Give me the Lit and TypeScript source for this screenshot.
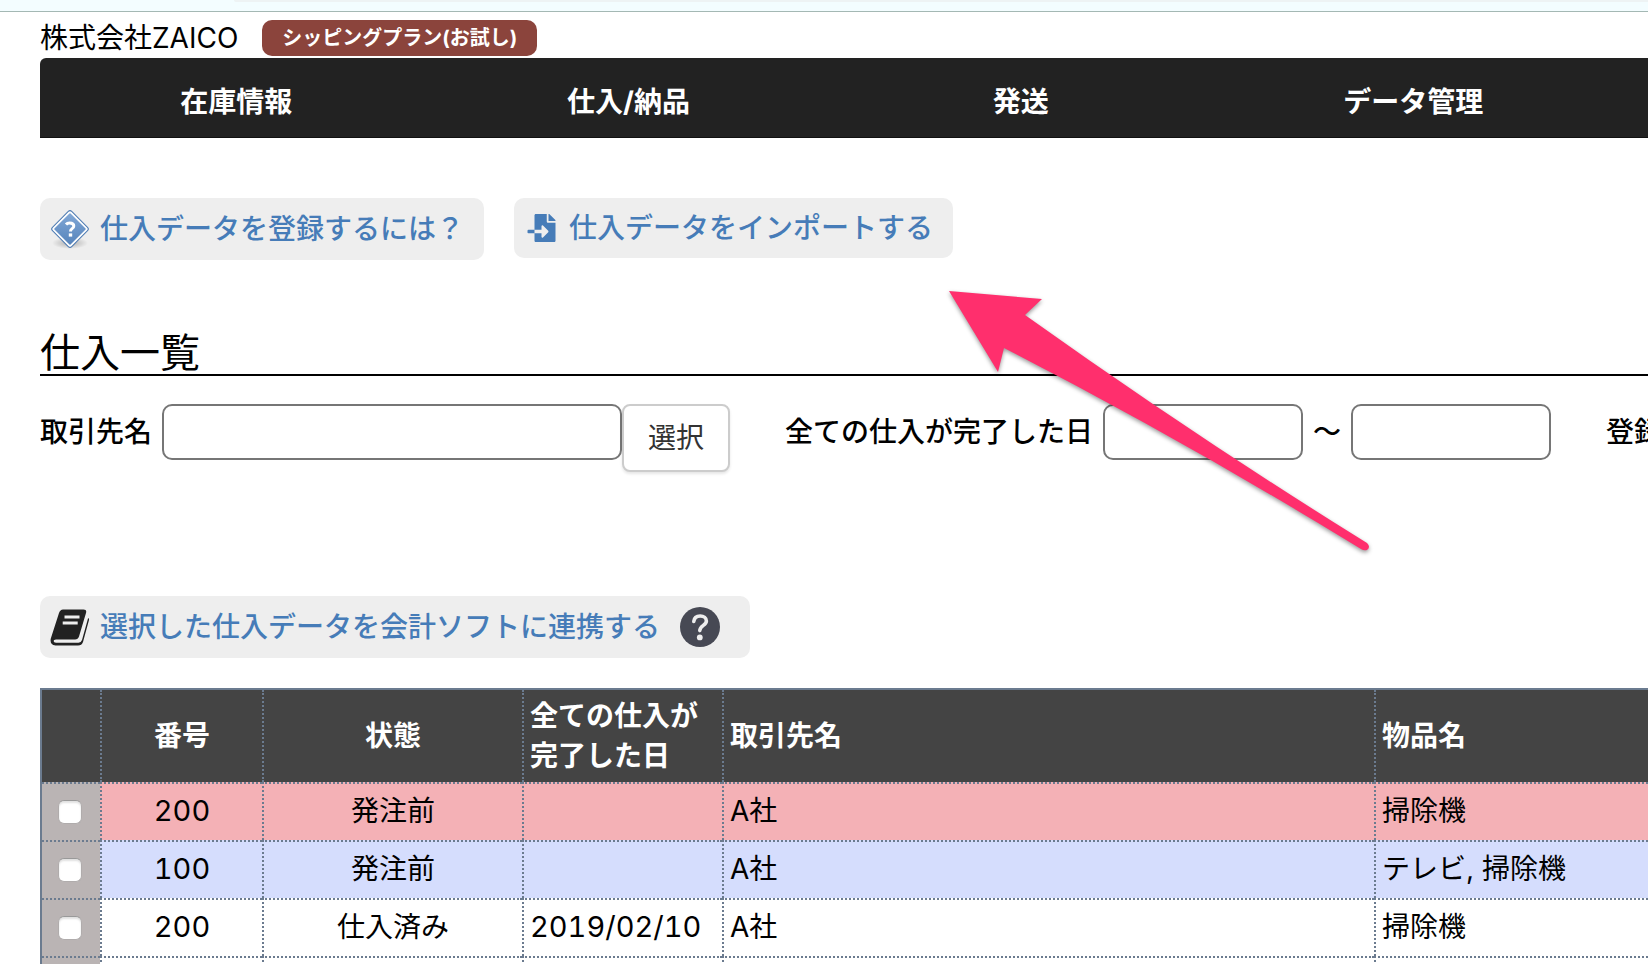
import { LitElement, html, css, svg, nothing } from "lit";
import { customElement } from "lit/decorators.js";
import { classMap } from "lit/directives/class-map.js";

interface PurchaseRow {
  no: string;
  status: string;
  done: string;
  vendor: string;
  items: string;
  tone: "" | "pink" | "blue";
}

const NAV = ["在庫情報", "仕入/納品", "発送", "データ管理"];

const ROWS: PurchaseRow[] = [
  { no: "200", status: "発注前", done: "", vendor: "A社", items: "掃除機", tone: "pink" },
  { no: "100", status: "発注前", done: "", vendor: "A社", items: "テレビ, 掃除機", tone: "blue" },
  { no: "200", status: "仕入済み", done: "2019/02/10", vendor: "A社", items: "掃除機", tone: "" },
  { no: "", status: "", done: "", vendor: "", items: "", tone: "" },
];

const helpDiamond = svg`
  <defs>
    <linearGradient id="sign" x1="0" y1="0" x2="1" y2="1">
      <stop offset="0" stop-color="#82a8d6"></stop>
      <stop offset="1" stop-color="#5583bb"></stop>
    </linearGradient>
    <radialGradient id="floor">
      <stop offset="0" stop-color="#000" stop-opacity="0.28"></stop>
      <stop offset="1" stop-color="#000" stop-opacity="0"></stop>
    </radialGradient>
  </defs>
  <ellipse cx="20" cy="34" rx="18" ry="6" fill="url(#floor)"></ellipse>
  <rect x="6.4" y="6.4" width="27.2" height="27.2" rx="2.4" transform="rotate(45 20 20)" fill="#fff" stroke="#4c7ab2" stroke-width="1"></rect>
  <rect x="8.6" y="8.6" width="22.8" height="22.8" rx="0.8" transform="rotate(45 20 20)" fill="url(#sign)"></rect>
  <path d="M16 15.4 q1.200 -1.400 3.600 -1.400 q4.200 0 4.200 3 q0 1.700 -1.800 2.700 q-1.500 0.900 -1.500 2.700" fill="none" stroke="#fff" stroke-width="3"></path>
  <rect x="18.800" y="24.400" width="3.400" height="3.200" fill="#fff"></rect>`;

const fileImport = svg`
  <path fill="#467cb8" d="M16 288c-8.800 0-16 7.200-16 16v32c0 8.800 7.200 16 16 16h112v-64zm489-183L407.100 7c-4.500-4.500-10.600-7-17-7H384v128h128v-6.100c0-6.300-2.500-12.400-7-16.900zm-153 31V0H152c-13.300 0-24 10.700-24 24v264h128v-65.200c0-14.300 17.300-21.400 27.400-11.300L379 308c6.600 6.700 6.600 17.400 0 24l-95.700 96.400c-10.100 10.100-27.400 3-27.400-11.300V352H128v136c0 13.300 10.700 24 24 24h336c13.300 0 24-10.700 24-24V160H376c-13.200 0-24-10.800-24-24z"></path>`;

const book = svg`
  <path fill="#222" d="M13 2.500 H33.500 Q37 2.500 36 6 L29 29.500 Q28 32.500 25 32.500 H6 Q3.600 32.500 3.600 34 Q3.600 35.800 6 35.800 H28.500 Q31 35.800 32 33 L38 11.500 Q39.300 10.500 39 13 L33 35 Q31.800 38.500 28 38.500 H5.500 Q-0.500 38 0.800 31.500 L9 6 Q10.200 2.500 13 2.500 Z"></path>
  <path d="M14.500 10 H29.500 M12.700 16 H27.700" stroke="#eee" stroke-width="2.800" fill="none"></path>`;

const helpCircle = svg`
  <circle cx="20" cy="20" r="20" fill="#474954"></circle>
  <path d="M13.800 14.400 C14.200 10.600 16.800 9 20.200 9 C23.800 9 26.400 11 26.400 14 C26.400 18.400 19.800 18.400 19.800 23.600" fill="none" stroke="#eee" stroke-width="3.600" stroke-linecap="round"></path>
  <circle cx="19.800" cy="30.400" r="2.900" fill="#eee"></circle>`;

@customElement("app-root")
export class AppRoot extends LitElement {
  static styles = css`
    :host {
      display: block;
      position: relative;
      height: 100vh;
      overflow: hidden;
      background: #fff;
      color: #000;
      font: 400 28px/40px Inter, "Noto Sans CJK JP", sans-serif;
    }
    * {
      box-sizing: border-box;
    }
    .chrome {
      height: 12px;
      padding-left: 234px;
      background: #f3fdff;
      border-bottom: 1px solid #a4b8b4;
    }
    .address {
      height: 2px;
      background: #eef3f4;
      border-bottom-left-radius: 8px;
    }
    .page {
      padding-left: 40px;
    }
    .wide {
      width: 122%;
    }
    .brand {
      display: flex;
      align-items: center;
      gap: 24px;
      height: 46px;
      padding-top: 6px;
    }
    .plan {
      padding: 0 20px;
      border-radius: 10px;
      background: #8b443c;
      color: #fff;
      font-size: 20px;
      font-weight: 700;
      line-height: 36px;
    }
    nav {
      display: grid;
      grid-template-columns: repeat(5, 1fr);
      height: 80px;
      border-radius: 6px 6px 0 0;
      border-bottom: 1px solid #111;
      background: #222;
    }
    nav a {
      display: flex;
      align-items: center;
      justify-content: center;
      padding-top: 8px;
      color: #fff;
      font-weight: 700;
      text-decoration: none;
    }
    .actions {
      display: flex;
      align-items: flex-start;
      gap: 30px;
      margin-top: 60px;
      min-height: 62px;
    }
    .action {
      display: inline-flex;
      align-items: center;
      gap: 10px;
      height: 62px;
      padding: 0 20px 0 10px;
      border-radius: 10px;
      background: #eee;
    }
    .action.short {
      height: 60px;
    }
    .action a {
      color: #467cb8;
      font-weight: 500;
      text-decoration: none;
    }
    .action svg {
      display: block;
      flex: none;
    }
    .action.export {
      padding-right: 30px;
    }
    .export .help {
      margin-left: 10px;
    }
    .help {
      display: block;
      padding: 0;
      border: 0;
      background: none;
    }
    h1 {
      margin: 72px 0 28px;
      border-bottom: 2px solid #000;
      font-size: 40px;
      font-weight: 400;
      line-height: 42px;
    }
    .filters {
      display: flex;
      align-items: flex-start;
      gap: 55px;
      margin-bottom: 124px;
    }
    .field {
      display: flex;
      align-items: flex-start;
      font-weight: 500;
      white-space: nowrap;
    }
    .field label,
    .field span {
      margin-right: 10px;
      line-height: 56px;
    }
    .field span {
      margin-left: 10px;
    }
    .field input {
      width: 200px;
      height: 56px;
      padding: 0 10px;
      border: 2px solid #767676;
      border-radius: 10px;
      background: #fff;
      font: inherit;
    }
    .field input.vendor {
      width: 460px;
    }
    .pick {
      height: 68px;
      padding: 0 24px;
      border: 2px solid #ccc;
      border-radius: 8px;
      background: #fff;
      box-shadow: 0 2px 3px rgba(0, 0, 0, 0.1);
      color: #333;
      font: inherit;
      font-weight: 400;
    }
    table {
      margin-top: 30px;
      table-layout: fixed;
      border: 2px solid #6b7b8f;
      border-spacing: 0;
    }
    .c-check {
      width: 58px;
    }
    .c-no {
      width: 162px;
    }
    .c-status {
      width: 260px;
    }
    .c-done {
      width: 200px;
    }
    .c-vendor {
      width: 652px;
    }
    th,
    td {
      padding: 0 6px;
      border-left: 2px dotted #6b7b8f;
      text-align: left;
      white-space: nowrap;
    }
    th:first-child,
    td:first-child {
      border-left: 0;
    }
    th {
      height: 92px;
      background: #444;
      color: #fff;
      font-weight: 700;
    }
    td {
      height: 58px;
      padding-bottom: 2px;
      border-top: 2px dotted #6b7b8f;
    }
    .mid {
      text-align: center;
    }
    .num {
      font-size: 29px;
      font-variant-numeric: tabular-nums;
    }
    .pink td {
      background: #f4b1b6;
    }
    .blue td {
      background: #d5ddfd;
    }
    tr td.check {
      padding: 0;
      background: #bab4b4;
    }
    .check input {
      appearance: none;
      display: block;
      width: 24px;
      height: 24px;
      margin: 0 16px;
      border: 1px solid #b0acac;
      border-top-color: #999;
      border-radius: 6px;
      background: #fff;
      box-shadow: inset 0 2px 2px rgba(0, 0, 0, 0.12);
    }
    .pointer {
      position: absolute;
      left: 940px;
      top: 280px;
      filter: drop-shadow(0 2px 2px rgba(0, 0, 0, 0.4));
      pointer-events: none;
    }
  `;

  private renderRow(row: PurchaseRow) {
    return html`
      <tr class=${classMap({ pink: row.tone === "pink", blue: row.tone === "blue" })}>
        <td class="check">
          ${row.no ? html`<input type="checkbox" aria-label="選択" />` : nothing}
        </td>
        <td class="mid num">${row.no}</td>
        <td class="mid">${row.status}</td>
        <td class="num">${row.done}</td>
        <td>${row.vendor}</td>
        <td>${row.items}</td>
      </tr>
    `;
  }

  render() {
    return html`
      <div class="chrome"><div class="address"></div></div>
      <div class="page">
        <header>
          <div class="brand">
            <div>株式会社ZAICO</div>
            <div class="plan">シッピングプラン(お試し)</div>
          </div>
          <nav class="wide">${NAV.map((label) => html`<a href="#">${label}</a>`)}</nav>
        </header>
        <main>
          <div class="actions">
            <div class="action">
              <svg width="40" height="40" viewBox="0 0 40 40">${helpDiamond}</svg>
              <a href="#">仕入データを登録するには？</a>
            </div>
            <div class="action short">
              <svg width="35" height="28" viewBox="0 0 512 512">${fileImport}</svg>
              <a href="#">仕入データをインポートする</a>
            </div>
          </div>
          <h1 class="wide">仕入一覧</h1>
          <form class="filters wide">
            <div class="field">
              <label for="vendor">取引先名</label>
              <input id="vendor" class="vendor" type="text" />
              <button class="pick" type="button">選択</button>
            </div>
            <div class="field">
              <label for="from">全ての仕入が完了した日</label>
              <input id="from" type="text" />
              <span>〜</span>
              <input type="text" aria-label="終了日" />
            </div>
            <div class="field">
              <label for="created">登録日</label>
              <input id="created" type="text" />
            </div>
          </form>
          <div class="action export">
            <svg width="40" height="40" viewBox="0 0 40 40">${book}</svg>
            <a href="#">選択した仕入データを会計ソフトに連携する</a>
            <button class="help" type="button" aria-label="ヘルプ">
              <svg width="40" height="40" viewBox="0 0 40 40">${helpCircle}</svg>
            </button>
          </div>
          <table class="wide">
            <colgroup>
              <col class="c-check" />
              <col class="c-no" />
              <col class="c-status" />
              <col class="c-done" />
              <col class="c-vendor" />
              <col />
            </colgroup>
            <thead>
              <tr>
                <th></th>
                <th class="mid">番号</th>
                <th class="mid">状態</th>
                <th>全ての仕入が<br />完了した日</th>
                <th>取引先名</th>
                <th>物品名</th>
              </tr>
            </thead>
            <tbody>
              ${ROWS.map((row) => this.renderRow(row))}
            </tbody>
          </table>
        </main>
      </div>
      <svg class="pointer" width="440" height="280" viewBox="940 280 440 280" aria-hidden="true">
        <path
          fill="#ff2f6d"
          d="M949 291 L1042 299 L1025 315 Q1196 437 1367 543 Q1371 547 1367 550 Q1364 551 1361 549 Q1183 440 1004 348 L998 372 Z"
        ></path>
      </svg>
    `;
  }
}
